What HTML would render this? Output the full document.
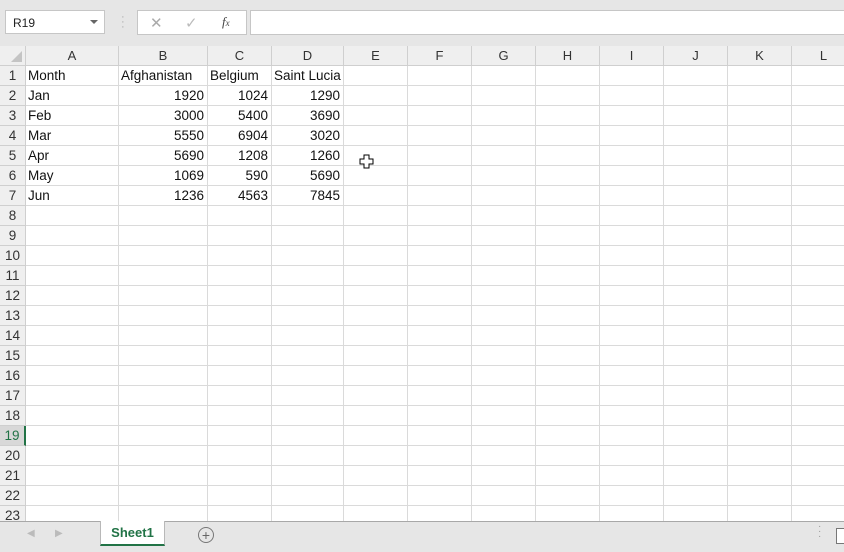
<!DOCTYPE html>
<html><head><style>
body{margin:0;width:844px;height:552px;overflow:hidden;background:#e6e6e6;font-family:"Liberation Sans",sans-serif;position:relative}
.nb{position:absolute;left:5px;top:10px;width:100px;height:24px;background:#fff;border:1px solid #c6c6c6;box-sizing:border-box;font-size:12px;color:#222;padding:5px 0 0 7px}
.fx{position:absolute;left:137px;top:10px;width:110px;height:25px;background:#fff;border:1px solid #c6c6c6;box-sizing:border-box}
.fi{position:absolute;left:250px;top:10px;width:600px;height:25px;background:#fff;border:1px solid #c6c6c6;box-sizing:border-box}
table{position:absolute;left:0;top:46px;width:856px;border-collapse:separate;border-spacing:0;table-layout:fixed;background:#fff}
td{height:20px;box-sizing:border-box;border-right:1px solid #dadada;border-bottom:1px solid #dadada;font-size:13.5px;color:#111;padding:0 3px 0 2px;white-space:nowrap;overflow:hidden;line-height:19px}
td.h{background:#efefef;color:#333;text-align:center;border-color:#cfcfcf;padding:0}
tr:first-child td{background:#efefef;text-align:center;color:#333;border-color:#cfcfcf;padding:0;font-size:13px}
td.r{text-align:right}
.tabs{position:absolute;left:0;top:521px;width:844px;height:27px;background:#e6e6e6;border-top:1px solid #a8a8a8}
</style></head><body>
<div class="nb">R19<span style="position:absolute;right:6px;top:9px;border:4px solid transparent;border-top:4px solid #666;border-bottom:0"></span></div>
<div style="position:absolute;left:121px;top:15px;color:#aaa;font-size:11px;line-height:5px">·<br>·<br>·</div>
<div class="fx"><span style="position:absolute;left:12px;top:3px;color:#aaa;font-size:15px">✕</span><span style="position:absolute;left:47px;top:3px;color:#bbb;font-size:15px">✓</span><span style="position:absolute;left:84px;top:3px;color:#444;font-size:13px;font-style:italic;font-family:'Liberation Serif',serif">f<span style="font-size:9px">x</span></span></div>
<div class="fi"></div>
<table>
<colgroup><col style="width:26px"><col style="width:93px"><col style="width:89px"><col style="width:64px"><col style="width:72px"><col style="width:64px"><col style="width:64px"><col style="width:64px"><col style="width:64px"><col style="width:64px"><col style="width:64px"><col style="width:64px"><col style="width:64px"></colgroup>
<tr><td style="position:relative"><span style="position:absolute;right:3px;bottom:3px;border-left:11px solid transparent;border-bottom:11px solid #c4c4c4"></span></td><td>A</td><td>B</td><td>C</td><td>D</td><td>E</td><td>F</td><td>G</td><td>H</td><td>I</td><td>J</td><td>K</td><td>L</td></tr>
<tr><td class="h">1</td><td>Month</td><td>Afghanistan</td><td>Belgium</td><td>Saint Lucia</td><td></td><td></td><td></td><td></td><td></td><td></td><td></td><td></td></tr>
<tr><td class="h">2</td><td>Jan</td><td class="r">1920</td><td class="r">1024</td><td class="r">1290</td><td></td><td></td><td></td><td></td><td></td><td></td><td></td><td></td></tr>
<tr><td class="h">3</td><td>Feb</td><td class="r">3000</td><td class="r">5400</td><td class="r">3690</td><td></td><td></td><td></td><td></td><td></td><td></td><td></td><td></td></tr>
<tr><td class="h">4</td><td>Mar</td><td class="r">5550</td><td class="r">6904</td><td class="r">3020</td><td></td><td></td><td></td><td></td><td></td><td></td><td></td><td></td></tr>
<tr><td class="h">5</td><td>Apr</td><td class="r">5690</td><td class="r">1208</td><td class="r">1260</td><td></td><td></td><td></td><td></td><td></td><td></td><td></td><td></td></tr>
<tr><td class="h">6</td><td>May</td><td class="r">1069</td><td class="r">590</td><td class="r">5690</td><td></td><td></td><td></td><td></td><td></td><td></td><td></td><td></td></tr>
<tr><td class="h">7</td><td>Jun</td><td class="r">1236</td><td class="r">4563</td><td class="r">7845</td><td></td><td></td><td></td><td></td><td></td><td></td><td></td><td></td></tr>
<tr><td class="h">8</td><td></td><td></td><td></td><td></td><td></td><td></td><td></td><td></td><td></td><td></td><td></td><td></td></tr>
<tr><td class="h">9</td><td></td><td></td><td></td><td></td><td></td><td></td><td></td><td></td><td></td><td></td><td></td><td></td></tr>
<tr><td class="h">10</td><td></td><td></td><td></td><td></td><td></td><td></td><td></td><td></td><td></td><td></td><td></td><td></td></tr>
<tr><td class="h">11</td><td></td><td></td><td></td><td></td><td></td><td></td><td></td><td></td><td></td><td></td><td></td><td></td></tr>
<tr><td class="h">12</td><td></td><td></td><td></td><td></td><td></td><td></td><td></td><td></td><td></td><td></td><td></td><td></td></tr>
<tr><td class="h">13</td><td></td><td></td><td></td><td></td><td></td><td></td><td></td><td></td><td></td><td></td><td></td><td></td></tr>
<tr><td class="h">14</td><td></td><td></td><td></td><td></td><td></td><td></td><td></td><td></td><td></td><td></td><td></td><td></td></tr>
<tr><td class="h">15</td><td></td><td></td><td></td><td></td><td></td><td></td><td></td><td></td><td></td><td></td><td></td><td></td></tr>
<tr><td class="h">16</td><td></td><td></td><td></td><td></td><td></td><td></td><td></td><td></td><td></td><td></td><td></td><td></td></tr>
<tr><td class="h">17</td><td></td><td></td><td></td><td></td><td></td><td></td><td></td><td></td><td></td><td></td><td></td><td></td></tr>
<tr><td class="h">18</td><td></td><td></td><td></td><td></td><td></td><td></td><td></td><td></td><td></td><td></td><td></td><td></td></tr>
<tr><td class="h" style="background:#d8d8d8;color:#217346;border-right:2px solid #217346">19</td><td></td><td></td><td></td><td></td><td></td><td></td><td></td><td></td><td></td><td></td><td></td><td></td></tr>
<tr><td class="h">20</td><td></td><td></td><td></td><td></td><td></td><td></td><td></td><td></td><td></td><td></td><td></td><td></td></tr>
<tr><td class="h">21</td><td></td><td></td><td></td><td></td><td></td><td></td><td></td><td></td><td></td><td></td><td></td><td></td></tr>
<tr><td class="h">22</td><td></td><td></td><td></td><td></td><td></td><td></td><td></td><td></td><td></td><td></td><td></td><td></td></tr>
<tr><td class="h">23</td><td></td><td></td><td></td><td></td><td></td><td></td><td></td><td></td><td></td><td></td><td></td><td></td></tr>
</table>
<svg style="position:absolute;left:359px;top:154px" width="16" height="16"><path d="M5 1h5v4h4v5h-4v4H5v-4H1V5h4z" fill="#fff" stroke="#000" stroke-width="1"/></svg>
<div class="tabs">
<span style="position:absolute;left:27px;top:6px;color:#bbb;font-size:10px">◀</span>
<span style="position:absolute;left:55px;top:6px;color:#bbb;font-size:10px">▶</span>
<div style="position:absolute;left:100px;top:-1px;width:65px;height:25px;background:#fff;border:1px solid #b8b8b8;border-top:0;border-bottom:2px solid #217346;box-sizing:border-box;text-align:center;font-weight:bold;color:#217346;font-size:13px;line-height:23px">Sheet1</div>
<div style="position:absolute;left:198px;top:5px;width:14px;height:14px;border:1.5px solid #777;border-radius:50%;text-align:center;line-height:14px;font-size:14px;color:#666">+</div>
<span style="position:absolute;left:818px;top:2px;color:#999;font-size:10px;line-height:5px">·<br>·<br>·</span>
<div style="position:absolute;left:836px;top:6px;width:12px;height:14px;border:1px solid #777;background:#fff"></div>
</div>
</body></html>
